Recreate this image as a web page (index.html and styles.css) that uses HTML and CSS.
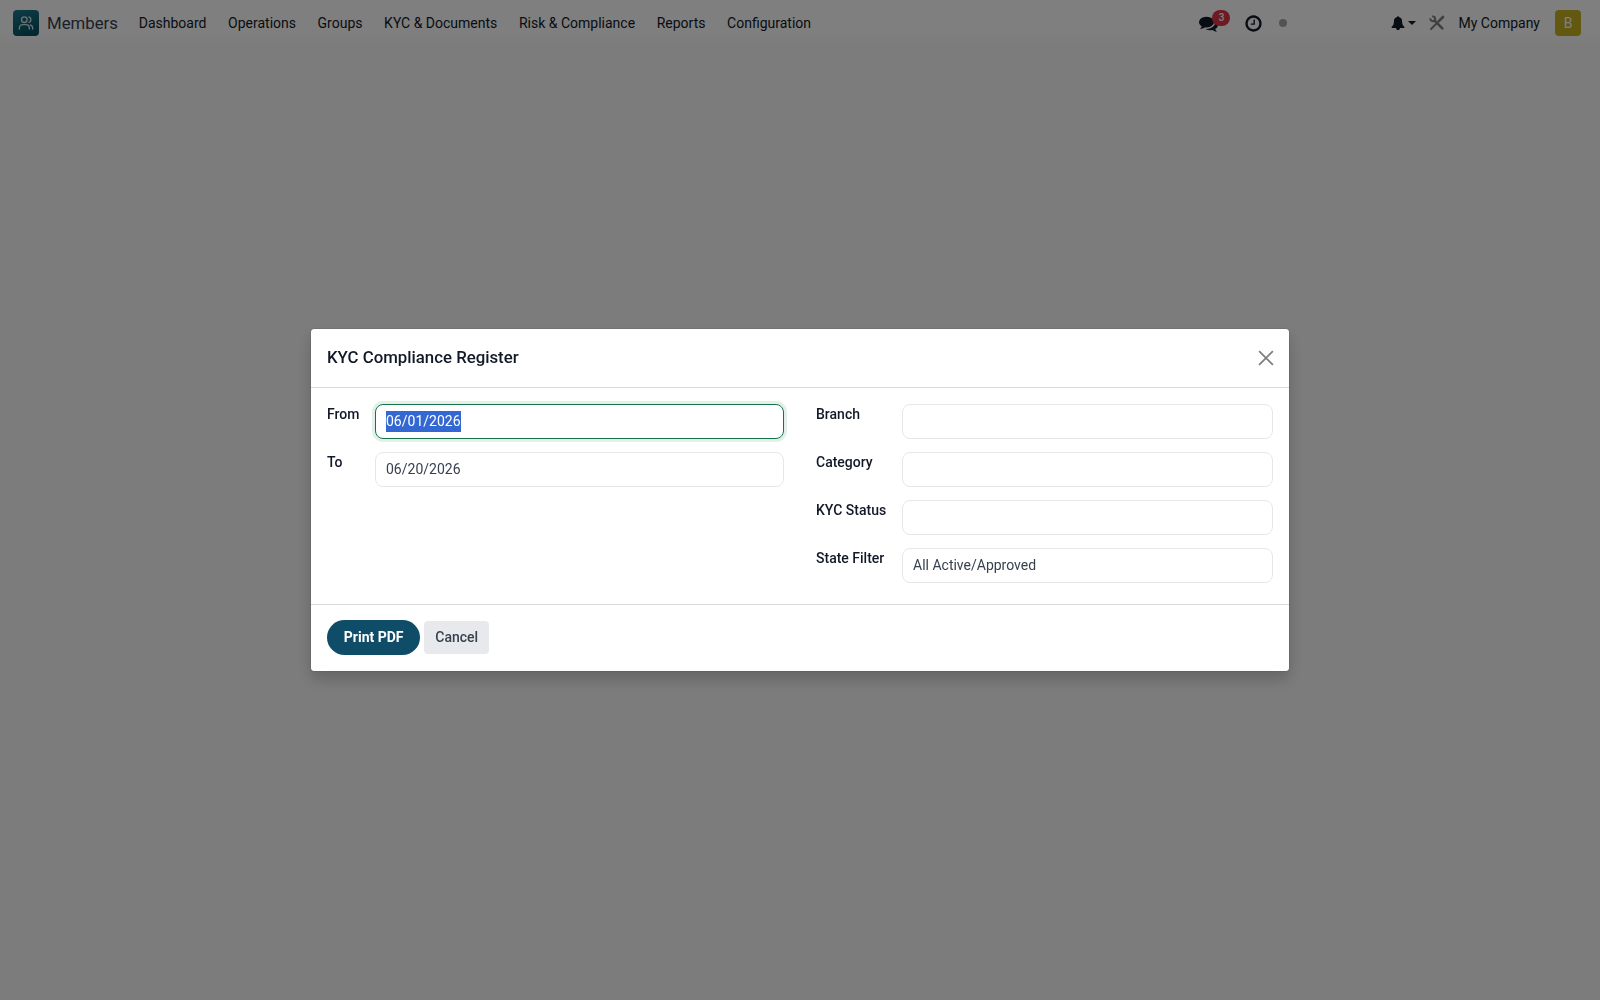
FILE: index.html
```html
<!DOCTYPE html>
<html lang="en">
<head>
  <meta charset="UTF-8">
  <meta name="viewport" content="width=device-width, initial-scale=1.0">
  <title>Members</title>
  <link rel="stylesheet" href="styles.css">
</head>
<body>
  <!-- Navbar -->
  <header class="navbar">
    <a class="brand" href="#">
      <span class="brand-icon">
        <svg viewBox="0 0 24 24" width="16" height="16" fill="none" stroke="currentColor" stroke-width="2" stroke-linecap="round">
          <circle cx="9.500" cy="7" r="4.200"/>
          <path d="M16.500 3a4.200 4.200 0 0 1 0 8"/>
          <path d="M2 21v-1.500a5 5 0 0 1 5-5h5a5 5 0 0 1 5 5V21"/>
          <path d="M18.500 14.800a5 5 0 0 1 3.500 4.700V21"/>
        </svg>
      </span>
      <span class="brand-name">Members</span>
    </a>
    <nav class="menu">
      <a href="#">Dashboard</a>
      <a href="#">Operations</a>
      <a href="#">Groups</a>
      <a href="#">KYC &amp; Documents</a>
      <a href="#">Risk &amp; Compliance</a>
      <a href="#">Reports</a>
      <a href="#">Configuration</a>
    </nav>
    <div class="systray">
      <span class="messages">
        <svg viewBox="0 0 1792 1792" width="19" height="19" fill="currentColor"><path d="M1408 768q0 139-94 257t-256.500 186.500-353.500 68.500q-86 0-176-16-124 88-278 128-36 9-86 16h-3q-11 0-20.500-8t-11.500-21q-1-3-1-6.500t.5-6.500 2-6l2.500-5 3.500-5.500 4-5 4.500-5 4-4.500q5-6 23-25t26-29.500 22.500-29 25-38.500 20.500-44q-124-72-195-177t-71-224q0-139 94-257t256.500-186.500 353.500-68.500 353.500 68.500 256.500 186.500 94 257zm384 256q0 120-71 224.500t-195 176.500q10 24 20.500 44t25 38.500 22.500 29 26 29.500 23 25q1 1 4 4.500t4.500 5 4 5 3.500 5.500l2.500 5 2 6 .5 6.500-1 6.500q-3 14-13 22t-22 7q-50-7-86-16-154-40-278-128-90 16-176 16-271 0-472-132 58 4 88 4 161 0 309-45t264-129q125-92 192-212t67-254q0-77-23-152 129 71 204 178t75 230z"/></svg>
        <span class="badge">3</span>
      </span>
      <svg class="clock" viewBox="0 0 1792 1792" width="19" height="19" fill="currentColor"><path d="M1024 544v448q0 14-9 23t-23 9h-320q-14 0-23-9t-9-23v-64q0-14 9-23t23-9h224v-352q0-14 9-23t23-9h64q14 0 23 9t9 23zm416 352q0-148-73-273t-198-198-273-73-273 73-198 198-73 273 73 273 198 198 273 73 273-73 198-198 73-273zm224 0q0 209-103 385.500t-279.500 279.500-385.500 103-385.500-103-279.500-279.500-103-385.500 103-385.500 279.500-279.500 385.500-103 385.500 103 279.500 279.500 103 385.500z"/></svg>
      <span class="status-dot"></span>
      <span class="notify">
        <svg viewBox="0 0 1792 1792" width="14" height="14" fill="currentColor"><path d="M1728 1408q0 52-38 90t-90 38h-448q0 106-75 181t-181 75-181-75-75-181h-448q-52 0-90-38t-38-90q50-42 91-88t85-119.500 74.500-158.500 50-206 19.500-260q0-152 117-282.500t307-158.500q-8-19-8-39 0-40 28-68t68-28 68 28 28 68q0 20-8 39 190 28 307 158.500t117 282.500q0 139 19.500 260t50 206 74.500 158.500 85 119.500 91 88z"/></svg>
        <span class="caret"></span>
      </span>
      <svg class="tools" viewBox="0 0 16 16" width="16" height="16" fill="none" stroke="currentColor">
        <path d="M5.500 5.500l7.800 7.900" stroke-width="2.600" stroke-linecap="round"/>
        <path d="M3.200 1.500a2.400 2.400 0 1 1-1.700 1.700" stroke-width="2"/>
        <path d="M14 2l-4.400 4.400" stroke-width="2.700" stroke-linecap="round"/>
        <path d="M7 9l-5 5" stroke-width="2" stroke-linecap="round"/>
      </svg>
      <span class="company">My Company</span>
      <span class="avatar">B</span>
    </div>
  </header>

  <!-- Dialog -->
  <div class="overlay">
    <div class="modal" role="dialog">
      <div class="modal-header">
        <h4>KYC Compliance Register</h4>
        <button class="close" aria-label="Close">
          <svg viewBox="0 0 16 16" width="16" height="16" fill="none" stroke="currentColor" stroke-width="1.800" stroke-linecap="round"><path d="M1.600 1.600l12.800 12.800M14.400 1.600L1.600 14.400"/></svg>
        </button>
      </div>
      <div class="modal-body">
        <div class="group group-dates">
          <label>From</label>
          <div class="field focused"><span class="selected">06/01/2026</span></div>
          <label>To</label>
          <div class="field">06/20/2026</div>
        </div>
        <div class="group group-filters">
          <label>Branch</label>
          <div class="field"></div>
          <label>Category</label>
          <div class="field"></div>
          <label>KYC Status</label>
          <div class="field"></div>
          <label>State Filter</label>
          <div class="field">All Active/Approved</div>
        </div>
      </div>
      <div class="modal-footer">
        <button class="btn btn-primary">Print PDF</button>
        <button class="btn btn-secondary">Cancel</button>
      </div>
    </div>
  </div>
</body>
</html>
```
FILE: styles.css
```css
* {
  box-sizing: border-box;
}
body {
  margin: 0;
  height: 100vh;
  overflow: hidden;
  background: #f9f9f9;
  color: #111827;
  font-family: Roboto, sans-serif;
  font-size: 14px;
  line-height: 21px;
}
a {
  color: inherit;
  text-decoration: none;
}
svg {
  display: block;
}

/* Navbar */
.navbar {
  display: flex;
  align-items: center;
  height: 46px;
  padding: 0 19px 0 13px;
  background: linear-gradient(#ffffff 60%, #f9f9f9);
}
.brand {
  display: flex;
  align-items: center;
  gap: 8px;
  margin-right: 10px;
}
.brand-icon {
  display: flex;
  align-items: center;
  justify-content: center;
  width: 26px;
  height: 26px;
  border-radius: 4px;
  background: linear-gradient(160deg, #1c7a8c, #06485a);
  color: #d5e6ea;
}
.brand-name {
  font-size: 16.800px;
  color: #374151;
}
.menu {
  display: flex;
}
.menu a {
  padding: 0 10.800px;
}
.systray {
  display: flex;
  align-items: center;
  margin-left: auto;
}
.messages {
  position: relative;
  margin-right: 26px;
}
.badge {
  position: absolute;
  top: -4px;
  left: 13px;
  width: 18px;
  height: 16px;
  border-radius: 8px;
  background: #dc3545;
  color: #ffffff;
  font-size: 10px;
  font-weight: 500;
  line-height: 16px;
  text-align: center;
}
.status-dot {
  width: 8px;
  height: 8px;
  margin: 0 104px 0 16px;
  border-radius: 50%;
  background: #a5a5a5;
}
.notify {
  display: flex;
  align-items: center;
  gap: 3px;
}
.caret {
  border: 4px solid transparent;
  border-top-color: currentColor;
  border-bottom: 0;
}
.tools {
  margin: 0 13px;
  color: #808080;
}
.avatar {
  width: 26px;
  height: 26px;
  margin-left: 15px;
  border-radius: 4px;
  background: #c4b01e;
  color: #ffffff;
  line-height: 26px;
  text-align: center;
}

/* Dialog */
.overlay {
  position: fixed;
  inset: 0;
  display: flex;
  align-items: center;
  justify-content: center;
  background: rgba(0, 0, 0, 0.5);
}
.modal {
  width: 978px;
  border-radius: 3px;
  background: #ffffff;
  box-shadow: 0 0 1px rgba(0, 0, 0, 0.7), 0 8px 16px rgba(0, 0, 0, 0.2);
}
.modal-header {
  display: flex;
  align-items: center;
  justify-content: space-between;
  height: 59px;
  padding: 0 15px 0 16px;
  border-bottom: 1px solid #d8dadd;
}
.modal-header h4 {
  margin: 0 0 2px;
  font-size: 16.800px;
  font-weight: 500;
}
.close {
  padding: 0;
  border: 0;
  background: none;
  color: #7f7f7f;
}
.modal-body {
  display: grid;
  grid-template-columns: 1fr 1fr;
  gap: 32px;
  padding: 16px 16px 21px;
}
.group {
  display: grid;
  align-content: start;
  row-gap: 13px;
}
.group-dates {
  grid-template-columns: 48px 1fr;
}
.group-filters {
  grid-template-columns: 86px 1fr;
}
.group label {
  font-weight: 500;
}
.field {
  height: 35px;
  padding: 6px 10px;
  border: 1px solid #e5e7eb;
  border-radius: 8px;
  color: #374151;
}
.field.focused {
  border-color: #157347;
  box-shadow: 0 0 0 3px rgba(25, 135, 84, 0.12);
}
.selected {
  display: inline-block;
  background: #3367d1;
  color: #ffffff;
}
.modal-footer {
  display: flex;
  align-items: center;
  gap: 4px;
  height: 67px;
  padding: 0 16px 2px;
  border-top: 1px solid #d8dadd;
}
.btn {
  border: 0;
  font-family: inherit;
  font-size: 14px;
  font-weight: 500;
}
.btn-primary {
  height: 35px;
  padding: 0 16.800px;
  border-radius: 18px;
  background: #0f4c68;
  color: #ffffff;
  font-weight: 700;
}
.btn-secondary {
  height: 33px;
  padding: 0 11px;
  border-radius: 4px;
  background: #e7e9ed;
  color: #374151;
}
```
